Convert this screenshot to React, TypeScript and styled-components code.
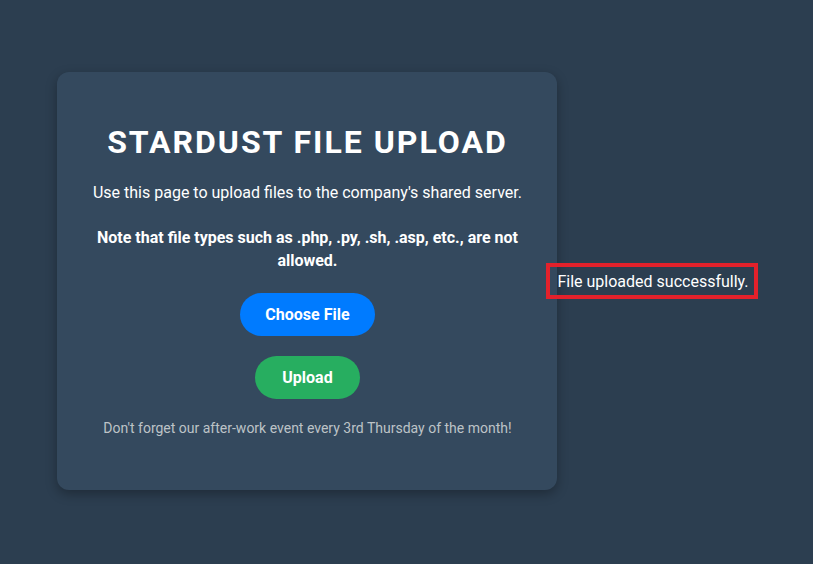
import React from "react";
import styled, { createGlobalStyle } from "styled-components";

const Global = createGlobalStyle`
  html, body { margin: 0; padding: 0; }
  body {
    background: #2c3e50;
    color: #ecf0f1;
    font-family: Roboto, "Liberation Sans", Arial, sans-serif;
  }
`;

const Page = styled.main`
  display: flex;
  align-items: center;
  justify-content: center;
  height: 100vh;
`;

const Card = styled.section`
  width: 500px;
  box-sizing: border-box;
  padding: 42px 30px 40px;
  margin-bottom: 2px;
  background: #34495e;
  border-radius: 12px;
  box-shadow: 0 4px 12px rgba(0, 0, 0, 0.3);
  text-align: center;
  display: flex;
  flex-direction: column;
  align-items: center;
`;

const Title = styled.h1`
  margin: 10px 0 20px;
  font-size: 32px;
  line-height: 37px;
  font-weight: 700;
  letter-spacing: 2px;
  color: #ffffff;
`;

const Text = styled.p<{ $bold?: boolean }>`
  margin: 0 0 ${(p) => (p.$bold ? 21 : 21)}px;
  font-size: 16px;
  line-height: ${(p) => (p.$bold ? 23 : 24)}px;
  font-weight: ${(p) => (p.$bold ? 700 : 400)};
  color: #ffffff;
`;

const Button = styled.button<{ $color: string; $pad: number }>`
  border: none;
  border-radius: 999px;
  background: ${(p) => p.$color};
  color: #ffffff;
  font-family: inherit;
  font-size: 16px;
  font-weight: 700;
  padding: 12px ${(p) => p.$pad}px;
  line-height: 19px;
  cursor: pointer;
  margin-bottom: 20px;
`;

const Footer = styled.p`
  margin: 0 0 13px;
  font-size: 14px;
  line-height: 18px;
  color: #bdc3c7;
`;

const Message = styled.div`
  position: relative;
  font-size: 16px;
  line-height: 19px;
  padding-right: 7px;
  margin-bottom: 2px;
  color: #ffffff;
  &::after {
    content: "";
    position: absolute;
    left: -11px;
    right: -2px;
    top: -9px;
    bottom: -8px;
    border: 4px solid #e3212b;
  }
`;

export default function App() {
  return (
    <>
      <Global />
      <Page>
        <Card>
          <Title>STARDUST FILE UPLOAD</Title>
          <Text>Use this page to upload files to the company's shared server.</Text>
          <Text $bold>
            Note that file types such as .php, .py, .sh, .asp, etc., are not allowed.
          </Text>
          <Button $color="#007bff" $pad={25}>Choose File</Button>
          <Button $color="#27ae60" $pad={27}>Upload</Button>
          <Footer>Don't forget our after-work event every 3rd Thursday of the month!</Footer>
        </Card>
        <Message>File uploaded successfully.</Message>
      </Page>
    </>
  );
}
